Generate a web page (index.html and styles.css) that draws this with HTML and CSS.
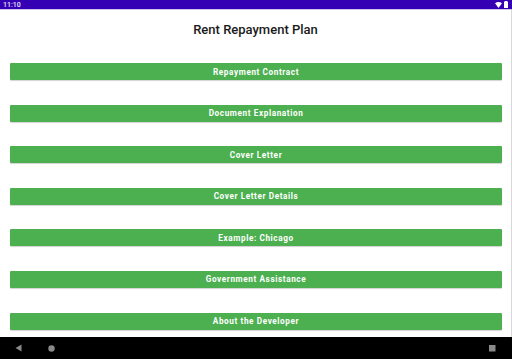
FILE: index.html
```html
<!DOCTYPE html>
<html lang="en">
<head>
    <meta charset="UTF-8">
    <meta name="viewport" content="width=device-width, initial-scale=1.0">
    <title>Rent Repayment Plan</title>
    <link rel="stylesheet" href="styles.css">
</head>
<body>
    <div class="screen">
        <div class="status-bar">
            <span class="clock">11:10</span>
            <span class="status-icons">
                <svg width="7" height="6" viewBox="0 0 7 6"><path d="M0 1.2 Q3.5 -1 7 1.2 L3.5 6 Z" fill="#fff"/></svg>
                <svg width="4" height="7" viewBox="0 0 4 7"><rect x="0" y="0.5" width="4" height="6.5" fill="#fff"/><rect x="1" y="0" width="2" height="1" fill="#fff"/></svg>
            </span>
        </div>

        <div class="content">
            <h1>Rent Repayment Plan</h1>
            <div class="menu">
                <button class="menu-button">Repayment Contract</button>
                <button class="menu-button">Document Explanation</button>
                <button class="menu-button">Cover Letter</button>
                <button class="menu-button">Cover Letter Details</button>
                <button class="menu-button">Example: Chicago</button>
                <button class="menu-button">Government Assistance</button>
                <button class="menu-button">About the Developer</button>
            </div>
        </div>

        <div class="nav-bar">
            <span class="nav-left">
                <svg width="8" height="8" viewBox="0 0 8 8"><path d="M6.5 0.5 L6.5 7.5 L0.5 4 Z" fill="#8a8a8a"/></svg>
                <svg width="7" height="7" viewBox="0 0 7 7"><circle cx="3.5" cy="3.5" r="3.2" fill="#8a8a8a"/></svg>
            </span>
            <svg width="7" height="7" viewBox="0 0 7 7"><rect x="0" y="0" width="6.5" height="6.5" fill="#8a8a8a"/></svg>
        </div>
    </div>
</body>
</html>
```

FILE: styles.css
```css
body
{
    margin: 0;
    font-family: Roboto, "Liberation Sans", sans-serif;
    background-color: white;
}

.screen
{
    width: 512px;
    height: 359px;
    display: flex;
    flex-direction: column;
    overflow: hidden;
}

.status-bar
{
    height: 9px;
    background-color: #3500b4;
    display: flex;
    align-items: center;
    justify-content: space-between;
    padding: 0 4px 0 3px;
    color: #e8e4f6;
    font-size: 7px;
    font-weight: 500;
    border-bottom: 1px solid #c9c2ea;
}

.status-icons
{
    display: flex;
    align-items: center;
    gap: 2px;
}

.content
{
    flex: 1;
    border-right: 1px solid #d8d8d8;
}

h1
{
    margin: 15px 0 0 0;
    height: 10px;
    line-height: 10px;
    text-align: center;
    font-size: 13px;
    font-weight: 500;
    color: #1a1a1a;
}

.menu
{
    display: flex;
    flex-direction: column;
    gap: 24.6px;
    padding: 28px 9px 0 10px;
}

.menu-button
{
    height: 17px;
    padding: 0;
    border: none;
    border-radius: 1px;
    background-color: #4caf50;
    box-shadow: 0 1px 1px rgba(0, 0, 0, 0.18);
    color: white;
    font-family: Roboto, "Liberation Sans", sans-serif;
    font-size: 8.2px;
    font-weight: 700;
    letter-spacing: 0.6px;
}

.nav-bar
{
    height: 22px;
    background-color: black;
    display: flex;
    align-items: center;
    justify-content: space-between;
    padding: 0 16px 0 15px;
}

.nav-left
{
    display: flex;
    align-items: center;
    gap: 25px;
}
```
